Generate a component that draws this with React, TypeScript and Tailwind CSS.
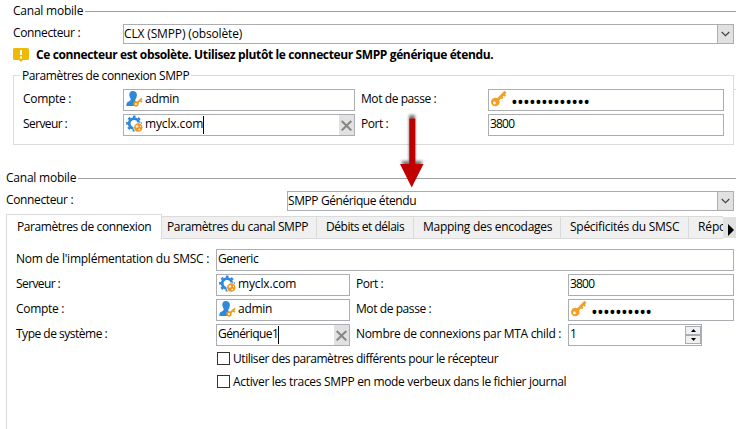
import { useLayoutEffect, useRef } from "react";
import type { ReactNode } from "react";

/* Single line of text whose letter spacing is adjusted to fill a given width. */
function Text({ children, width, className = "" }: { children: string; width: number; className?: string }) {
  const ref = useRef<HTMLSpanElement>(null);
  useLayoutEffect(() => {
    const el = ref.current;
    if (!el) return;
    el.style.letterSpacing = "0px";
    const natural = el.getBoundingClientRect().width;
    el.style.letterSpacing = `${(width - 0.8 - natural) / children.length}px`;
  }, [children, width]);
  return (
    <span ref={ref} className={`inline-block shrink-0 whitespace-pre ${className}`}>
      {children}
    </span>
  );
}

function Heading({ className }: { className: string }) {
  return (
    <div className={`flex h-4 items-center ${className}`}>
      <Text width={71}>Canal mobile</Text>
      <div className="mt-px ml-[2px] h-px flex-1 bg-[#a0a0a0]" />
    </div>
  );
}

function Select({ text, width, className }: { text: string; width: number; className: string }) {
  return (
    <div className={`flex h-5 shrink-0 border border-[#abadb3] bg-white ${className}`}>
      <div className="flex-1 leading-[17px]">
        <Text width={width}>{text}</Text>
      </div>
      <div className="flex w-4 items-center justify-center border-l border-[#abadb3] bg-[#e1e1e1]">
        <svg width="9" height="6" viewBox="0 0 9 6" fill="none" stroke="#444" strokeWidth="1.2">
          <path d="M.7 1l3.8 3.7L8.3 1" />
        </svg>
      </div>
    </div>
  );
}

function Field({ children, className }: { children: ReactNode; className: string }) {
  return (
    <div className={`flex h-[22px] shrink-0 border border-[#abadb3] bg-white pl-px leading-[18px] ${className}`}>
      {children}
    </div>
  );
}

function Label({ text, width, className }: { text: string; width: number; className: string }) {
  return (
    <div className={`h-[22px] shrink-0 leading-[19px] ${className}`}>
      <Text width={width}>{text}</Text>
    </div>
  );
}

function Caret() {
  return <span className="mt-px h-[18px] w-px shrink-0 bg-black" />;
}

function Clear() {
  return (
    <span className="ml-auto flex w-[15px] items-center justify-center bg-[#e1e1e1]">
      <svg width="11" height="11" viewBox="0 0 11 11" stroke="#858585" strokeWidth="2">
        <path d="M.7 1l9.6 9.4M10.3 1L.7 10.4" />
      </svg>
    </span>
  );
}

function UserIcon() {
  return (
    <svg className="ml-px shrink-0" width="18" height="18" viewBox="0 0 18 18">
      <path
        d="M6.8 1C4.6 1 3.2 2.5 3.3 4.8c.1 2 .8 3.2 1.4 4C5 10.500 4 11 1.800 12 .7 12.600.3 13.800.3 16H8l3.300-3.300c-1.200-.6-2.200-1-2-3 .8-1 1.600-2.700 1.600-5C10.900 2.400 9.200 1 6.800 1z"
        fill="#3089d6"
      />
      <path d="M10.500 13.500L16 8.500M14 10.500l2 1.600" stroke="#f29a1c" strokeWidth="1.800" fill="none" />
      <circle cx="10" cy="14" r="1.8" fill="#fff" stroke="#f29a1c" strokeWidth="1.700" />
    </svg>
  );
}

function GearIcon() {
  return (
    <svg className="ml-px shrink-0" width="18" height="18" viewBox="0 0 18 18">
      <circle cx="8" cy="8.500" r="4.800" fill="none" stroke="#3089d6" strokeWidth="2.800" />
      <circle cx="8" cy="8.500" r="6.800" fill="none" stroke="#3089d6" strokeWidth="2.200" strokeDasharray="2.670 2.670" strokeDashoffset="1.330" />
      <circle cx="12.300" cy="12.500" r="4.900" fill="#fff" />
      <circle cx="12.300" cy="12.500" r="4.200" fill="#ef9520" />
      <path d="M9.600 10.800l2-.8 1 1.200-1.400 1.600-1.200-.3zM13.800 10.300l1.600 1.300-1 .8zM12.300 14l1.800-.6.2 1.300-1.400 1z" fill="#fff3dc" />
    </svg>
  );
}

function KeyIcon() {
  return (
    <svg className="shrink-0" width="18" height="18" viewBox="0 0 18 18">
      <path d="M6 11.500L15.500 1.800" stroke="#f29f24" strokeWidth="2.800" fill="none" />
      <path d="M10.800 6.500l2 2M13.300 4l2 2" stroke="#f29f24" strokeWidth="2" />
      <circle cx="5.300" cy="12" r="4.300" fill="#f29f24" />
      <circle cx="4.500" cy="13" r="1.400" fill="#fff" />
    </svg>
  );
}

function WarningIcon() {
  return (
    <svg className="shrink-0" width="16" height="14" viewBox="0 0 16 14">
      <path d="M1.500 0h13Q16 0 16 1.500v9Q16 12 14.500 12H10l-2 2-2-2H1.500Q0 12 0 10.500v-9Q0 0 1.500 0z" fill="#efb908" />
      <path d="M7 2h2v5H7zM7 8.500h2v2H7z" fill="#fff" />
    </svg>
  );
}

function Tab({ text, width, className }: { text: string; width: number; className: string }) {
  return (
    <div className={`mt-[2px] h-[23px] shrink-0 overflow-hidden border-y border-r border-[#dadada] bg-[#f0f0f0] leading-[20px] ${className}`}>
      <Text width={width}>{text}</Text>
    </div>
  );
}

function Checkbox({ text, width }: { text: string; width: number }) {
  return (
    <label className="flex h-[23px] items-start pl-[211px]">
      <span className="h-[13px] w-[13px] border border-[#333] bg-white" />
      <span className="ml-[3px] leading-[13px]">
        <Text width={width}>{text}</Text>
      </span>
    </label>
  );
}

function Arrow() {
  return (
    <svg className="pointer-events-none absolute top-[108px] left-[392px]" width="42" height="86" viewBox="0 0 42 86">
      <defs>
        <filter id="soft" x="-30%" y="-30%" width="160%" height="160%">
          <feGaussianBlur stdDeviation="1.6" />
        </filter>
      </defs>
      <path d="M17 7h6v46h8l-11 20L9 53h8z" fill="#000" opacity=".55" filter="url(#soft)" />
      <path d="M17.300 10.500h6V56h8.200L19.700 79.500 8 56h9.300z" fill="#c00000" />
    </svg>
  );
}

function OldConnector() {
  return (
    <section className="h-[170px]">
      <Heading className="ml-[13px] pt-[6px]" />
      <div className="mt-[5px] flex">
        <div className="w-[123px] pt-[3px] pl-[13px] leading-[18px]">
          <Text width={68}>Connecteur :</Text>
        </div>
        <Select text="CLX (SMPP) (obsolète)" width={119} className="mt-[3px] w-[611px]" />
      </div>
      <div className="mt-[4px] ml-[13px] flex h-[14px]">
        <WarningIcon />
        <div className="ml-[7px] font-bold leading-[14px]">
          <Text width={458}>Ce connecteur est obsolète. Utilisez plutôt le connecteur SMPP générique étendu.</Text>
        </div>
      </div>
      <fieldset className="mt-[5px] ml-[13px] h-[78px] w-[721px] border border-[#dcdcdc] pl-[9px]">
        <legend className="-ml-[3px] h-4 pr-[2px] pl-[2px] leading-[17px]">
          <Text width={168}>Paramètres de connexion SMPP</Text>
        </legend>
        <div className="mt-[6px] flex">
          <Label text="Compte :" width={49} className="w-[100px]" />
          <Field className="w-[232px]">
            <UserIcon />
            <Text width={35} className="ml-px">admin</Text>
          </Field>
          <Label text="Mot de passe :" width={76} className="ml-[6px] w-[127px]" />
          <Field className="w-[236px]">
            <KeyIcon />
            <Text width={79} className="ml-[3px] pt-[3px] text-[18px]">•••••••••••••</Text>
          </Field>
        </div>
        <div className="mt-[3px] flex">
          <Label text="Serveur :" width={45} className="w-[100px]" />
          <Field className="w-[232px]">
            <GearIcon />
            <Text width={59} className="ml-px">myclx.com</Text>
            <Caret />
            <Clear />
          </Field>
          <Label text="Port :" width={28} className="ml-[6px] w-[127px]" />
          <Field className="w-[236px]">
            <Text width={25}>3800</Text>
          </Field>
        </div>
      </fieldset>
    </section>
  );
}

function NewConnector() {
  return (
    <section className="ml-[6px] flex flex-1 flex-col">
      <Heading className="" />
      <div className="mt-[5px] flex">
        <div className="w-[281px] leading-[17px]">
          <Text width={68}>Connecteur :</Text>
        </div>
        <Select text="SMPP Générique étendu" width={129} className="w-[447px]" />
      </div>
      <div className="mt-[3px] flex h-[25px] overflow-hidden">
        <div className="h-[25px] w-[156px] shrink-0 border-x border-t border-[#dadada] pl-[10px] leading-[24px]">
          <Text width={135}>Paramètres de connexion</Text>
        </div>
        <Tab text="Paramètres du canal SMPP" width={142} className="w-[155px] pl-[5px]" />
        <Tab text="Débits et délais" width={79} className="w-[97px] pl-[9px]" />
        <Tab text="Mapping des encodages" width={130} className="w-[147px] pl-[9px]" />
        <Tab text="Spécificités du SMSC" width={110} className="w-[128px] pl-[9px]" />
        <Tab text="Répo" width={29} className="w-[34px] border-r-0 pl-[9px]" />
        <div className="mt-[3px] flex h-[21px] w-[13px] shrink-0 items-center justify-end bg-[#e1e1e1]">
          <svg className="mt-[5px] mr-[2px]" width="6" height="12" viewBox="0 0 6 12">
            <path d="M0 0l6 6-6 6z" fill="#000" />
          </svg>
        </div>
      </div>
      <div className="flex-1 border-l border-[#dadada] pt-[10px] pl-[9px]">
        <div className="flex">
          <Label text="Nom de l'implémentation du SMSC :" width={194} className="w-[200px]" />
          <Field className="w-[518px]">
            <Text width={41}>Generic</Text>
          </Field>
        </div>
        <div className="mt-[3px] flex">
          <Label text="Serveur :" width={45} className="w-[200px]" />
          <Field className="w-[134px]">
            <GearIcon />
            <Text width={59} className="ml-px">myclx.com</Text>
          </Field>
          <Label text="Port :" width={28} className="ml-[6px] w-[212px]" />
          <Field className="w-[166px]">
            <Text width={25}>3800</Text>
          </Field>
        </div>
        <div className="mt-[3px] flex">
          <Label text="Compte :" width={49} className="w-[200px]" />
          <Field className="w-[134px]">
            <UserIcon />
            <Text width={35} className="ml-px">admin</Text>
          </Field>
          <Label text="Mot de passe :" width={76} className="ml-[6px] w-[212px]" />
          <Field className="w-[166px]">
            <KeyIcon />
            <Text width={61} className="ml-[3px] pt-[3px] text-[18px]">••••••••••</Text>
          </Field>
        </div>
        <div className="mt-[3px] flex">
          <Label text="Type de système :" width={92} className="w-[200px]" />
          <Field className="w-[134px]">
            <Text width={61}>Générique1</Text>
            <Caret />
            <Clear />
          </Field>
          <Label text="Nombre de connexions par MTA child :" width={206} className="ml-[6px] w-[212px]" />
          <Field className="w-[134px]">
            <Text width={7}>1</Text>
            <span className="mt-px ml-auto flex h-[18px] w-4 flex-col">
              <span className="flex h-[9px] items-center justify-center border border-[#abadb3] bg-[#f0f0f0]">
                <svg width="5" height="3" viewBox="0 0 5 3"><path d="M2.500 0L5 3H0z" /></svg>
              </span>
              <span className="flex h-[9px] items-center justify-center border border-[#abadb3] bg-[#f0f0f0]">
                <svg width="5" height="3" viewBox="0 0 5 3"><path d="M2.500 3L5 0H0z" /></svg>
              </span>
            </span>
          </Field>
        </div>
        <div className="-ml-[10px] pt-[6px]">
          <Checkbox text="Utiliser des paramètres différents pour le récepteur" width={266} />
          <Checkbox text="Activer les traces SMPP en mode verbeux dans le fichier journal" width={334} />
        </div>
      </div>
    </section>
  );
}

export default function App() {
  return (
    <main className="relative flex h-[429px] w-[736px] flex-col overflow-hidden bg-white font-['Open_Sans','Noto_Sans',sans-serif] text-[12px] leading-4 text-black">
      <OldConnector />
      <NewConnector />
      <Arrow />
      <span className="absolute top-[89px] right-0 h-px w-[2px] bg-[#dcdcdc]" />
    </main>
  );
}
